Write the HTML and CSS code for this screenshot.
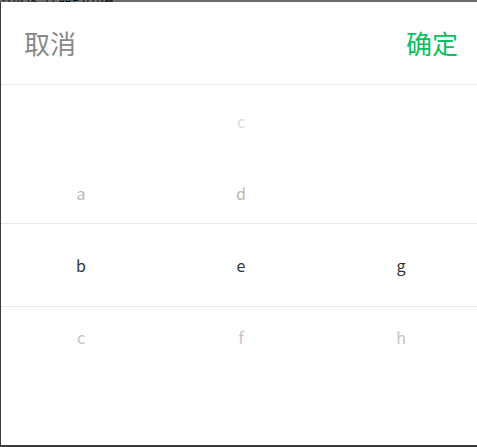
FILE: index.html
```html
<!DOCTYPE html>
<html lang="zh">
<head>
<meta charset="utf-8">
<link rel="stylesheet" href="styles.css">
</head>
<body>
<div class="topbar"><span class="topbar-text">示例选择器的用法</span></div>
<div class="sheet">
  <div class="header">
    <span class="btn cancel">取消</span>
    <span class="btn confirm">确定</span>
  </div>
  <div class="picker">
    <div class="col col-1">
      <div class="item near">a</div>
      <div class="item sel">b</div>
      <div class="item near2">c</div>
    </div>
    <div class="col col-2">
      <div class="item far">c</div>
      <div class="item near">d</div>
      <div class="item sel">e</div>
      <div class="item near2">f</div>
    </div>
    <div class="col col-3">
      <div class="item sel">g</div>
      <div class="item near2">h</div>
    </div>
    <div class="indicator"></div>
  </div>
</div>
</body>
</html>
```
FILE: styles.css
```css
html, body {
  margin: 0;
  padding: 0;
}
body {
  background: #3a3a3a;
  width: 477px;
  height: 447px;
  overflow: hidden;
  font-family: "Noto Sans CJK SC", "Noto Sans", sans-serif;
}
.topbar {
  height: 2px;
  background: #6b6b6b;
  overflow: hidden;
  position: relative;
}
.topbar-text {
  display: block;
  margin-top: -13px;
  margin-left: 2px;
  font-size: 14px;
  line-height: 16px;
  color: #111;
}
.sheet {
  margin-left: 1px;
  width: 480px;
  height: 443px;
  background: #fff;
}
.header {
  height: 82px;
  border-bottom: 1px solid #ececec;
  display: flex;
  align-items: center;
  justify-content: space-between;
  padding: 0 23px;
}
.btn {
  font-size: 26px;
  line-height: 30px;
}
.cancel { color: #888; }
.confirm { color: #07c160; }
.picker {
  position: relative;
  height: 360px;
  display: flex;
  overflow: hidden;
}
.col {
  flex: 1;
  display: flex;
  flex-direction: column;
}
.col-1 { padding-top: 72px; }
.col-2 { padding-top: 0; }
.col-3 { padding-top: 144px; }
.item {
  height: 72px;
  display: flex;
  align-items: center;
  justify-content: center;
  font-size: 16px;
  color: #333;
}
.item.far { color: #dcdcdc; }
.item.near { color: #b8b8b8; }
.item.near2 { color: #c4c4c4; }
.indicator {
  position: absolute;
  left: 0;
  right: 0;
  top: 138px;
  height: 82px;
  border-top: 1px solid #e8e8e8;
  border-bottom: 1px solid #e8e8e8;
  pointer-events: none;
}
```
